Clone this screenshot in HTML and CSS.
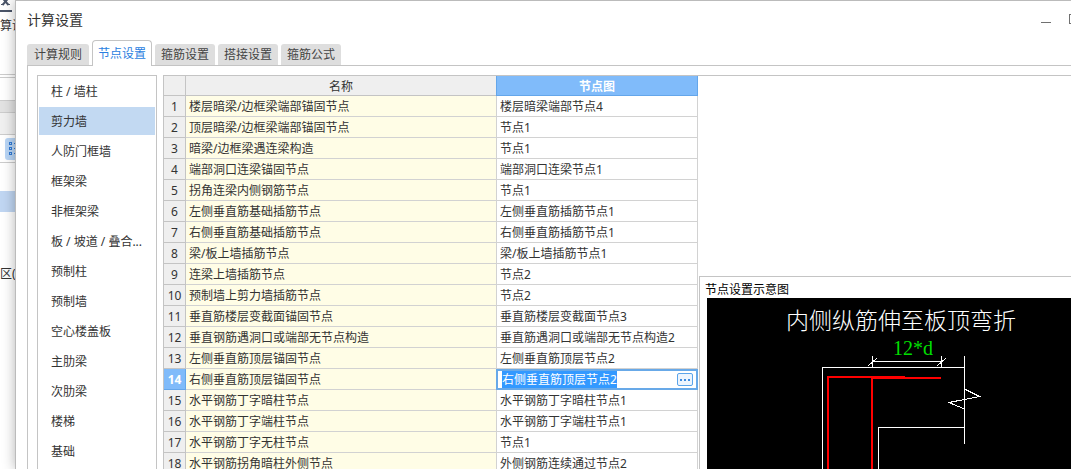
FILE: index.html
```html
<!DOCTYPE html>
<html lang="zh-CN">
<head>
<meta charset="utf-8">
<title>计算设置</title>
<link rel="stylesheet" href="styles.css">
</head>
<body>
<aside class="backdrop">
  <div class="bd-close"><svg width="12" height="10" viewBox="0 0 12 10"><path d="M2.500 -2L8.500 5M8.500 -2L2.500 5" stroke="#4a5468" stroke-width="2"/><path d="M1 4.500h3M7 4.500h3" stroke="#4a5468"/></svg></div>
  <div class="bd-title">算设</div>
  <div class="bd-row"></div>
  <div class="bd-band"></div>
  <div class="bd-panel"></div>
  <div class="bd-tool"><span class="bd-icon"><svg width="16" height="16" viewBox="0 0 16 16" fill="none" stroke="#2f7ad6"><rect x="1.5" y="1.5" width="2" height="2"/><rect x="1.5" y="6.5" width="2" height="2"/><rect x="1.5" y="11.5" width="2" height="2"/><path d="M6 2.5h8M6 7.5h8M6 12.5h8"/></svg></span></div>
  <div class="bd-highlight"></div>
  <div class="bd-text">区(</div>
</aside>
<main class="dialog">
  <header class="titlebar">
    <h1 class="title">计算设置</h1>
    <div class="controls">
      <button class="control" aria-label="最小化"><svg width="10" height="10" viewBox="0 0 10 10"><path d="M0 8.5h10" stroke="#707070"/></svg></button>
      <button class="control" aria-label="最大化"><svg width="10" height="10" viewBox="0 0 10 10"><rect x=".5" y=".5" width="9" height="9" fill="none" stroke="#707070"/></svg></button>
    </div>
  </header>
  <nav class="tabs">
    <button class="tab">计算规则</button>
    <button class="tab active">节点设置</button>
    <button class="tab">箍筋设置</button>
    <button class="tab">搭接设置</button>
    <button class="tab">箍筋公式</button>
  </nav>
  <section class="panel">
    <div class="types">
      <button class="type">柱 / 墙柱</button>
      <button class="type selected">剪力墙</button>
      <button class="type">人防门框墙</button>
      <button class="type">框架梁</button>
      <button class="type">非框架梁</button>
      <button class="type">板 / 坡道 / 叠合...</button>
      <button class="type">预制柱</button>
      <button class="type">预制墙</button>
      <button class="type">空心楼盖板</button>
      <button class="type">主肋梁</button>
      <button class="type">次肋梁</button>
      <button class="type">楼梯</button>
      <button class="type">基础</button>
    </div>
    <div class="content">
      <table class="grid">
        <colgroup><col class="c-num"><col class="c-name"><col class="c-node"></colgroup>
        <thead><tr><th></th><th>名称</th><th class="current">节点图</th></tr></thead>
        <tbody>
          <tr><th>1</th><td>楼层暗梁/边框梁端部锚固节点</td><td>楼层暗梁端部节点4</td></tr>
          <tr><th>2</th><td>顶层暗梁/边框梁端部锚固节点</td><td>节点1</td></tr>
          <tr><th>3</th><td>暗梁/边框梁遇连梁构造</td><td>节点1</td></tr>
          <tr><th>4</th><td>端部洞口连梁锚固节点</td><td>端部洞口连梁节点1</td></tr>
          <tr><th>5</th><td>拐角连梁内侧钢筋节点</td><td>节点1</td></tr>
          <tr><th>6</th><td>左侧垂直筋基础插筋节点</td><td>左侧垂直筋插筋节点1</td></tr>
          <tr><th>7</th><td>右侧垂直筋基础插筋节点</td><td>右侧垂直筋插筋节点1</td></tr>
          <tr><th>8</th><td>梁/板上墙插筋节点</td><td>梁/板上墙插筋节点1</td></tr>
          <tr><th>9</th><td>连梁上墙插筋节点</td><td>节点2</td></tr>
          <tr><th>10</th><td>预制墙上剪力墙插筋节点</td><td>节点2</td></tr>
          <tr><th>11</th><td>垂直筋楼层变截面锚固节点</td><td>垂直筋楼层变截面节点3</td></tr>
          <tr><th>12</th><td>垂直钢筋遇洞口或端部无节点构造</td><td>垂直筋遇洞口或端部无节点构造2</td></tr>
          <tr><th>13</th><td>左侧垂直筋顶层锚固节点</td><td>左侧垂直筋顶层节点2</td></tr>
          <tr><th class="current">14</th><td>右侧垂直筋顶层锚固节点</td><td class="edit-cell"><div class="editor"><input class="edit-input" type="text" aria-label="节点图" value="右侧垂直筋顶层节点2"><button class="more" aria-label="选择节点"><svg width="10" height="2" viewBox="0 0 10 2" fill="#3d8be0"><path d="M0 0h2v2H0zM4 0h2v2H4zM8 0h2v2H8z"/></svg></button></div></td></tr>
          <tr><th>15</th><td>水平钢筋丁字暗柱节点</td><td>水平钢筋丁字暗柱节点1</td></tr>
          <tr><th>16</th><td>水平钢筋丁字端柱节点</td><td>水平钢筋丁字端柱节点1</td></tr>
          <tr><th>17</th><td>水平钢筋丁字无柱节点</td><td>节点1</td></tr>
          <tr><th>18</th><td>水平钢筋拐角暗柱外侧节点</td><td>外侧钢筋连续通过节点2</td></tr>
        </tbody>
      </table>
      <div class="side">
        <div class="blank"></div>
        <section class="preview">
          <h2 class="preview-title">节点设置示意图</h2>
          <div class="canvas">
            <svg width="364" height="171" viewBox="707 298 364 171" fill="none" shape-rendering="crispEdges">
              <g stroke="#fff">
                <path d="M822.5 469V367.5H964.5M878.5 469V427.5H964.5M964.5 356V444"/>
                <path d="M872.5 356V367M941.5 356V367M872 361.5H942"/>
                <path d="M868 366L877 358M937 366L946 358M964.5 389L979.5 396.500L949 402.500L964.5 409"/>
              </g>
              <g stroke="#f00" stroke-width="2"><path d="M828 469V377H905M872 469V378H941"/></g>
              <text class="caption" x="786" y="329">内侧纵筋伸至板顶弯折</text>
              <text class="dimension" x="893" y="355">12*d</text>
            </svg>
          </div>
        </section>
      </div>
    </div>
  </section>
</main>
<script src="script.js"></script>
</body>
</html>
```
FILE: styles.css
```css
* { box-sizing: border-box; }
body {
  margin: 0;
  height: 100vh;
  display: flex;
  overflow: hidden;
  background: #fff;
  color: #333;
  font: 12px/20px "Noto Sans", "Noto Sans CJK SC", sans-serif;
}
button, input { font: inherit; color: inherit; border: 0; padding: 0; margin: 0; background: none; }
h1, h2 { margin: 0; font-weight: 400; }
svg { display: block; }

/* Main window behind the dialog */
.backdrop { width: 15px; flex: none; overflow: hidden; white-space: nowrap; }
.bd-close { height: 12px; width: 12px; border-bottom: 2px solid #4a5468; }
.bd-title { height: 63px; padding-top: 4px; border-bottom: 1px solid #ccc; }
.bd-row { height: 24px; margin-top: 2px; border: solid #ccc; border-width: 1px 0; }
.bd-band { height: 12px; background: #e2e2e2; border-bottom: 1px solid #ccc; }
.bd-panel { height: 22px; background: #f0f0f0; border-bottom: 1px solid #ccc; }
.bd-tool { height: 28px; padding: 3px 0 0 5px; border-bottom: 1px solid #ccc; }
.bd-icon { display: block; width: 24px; height: 22px; padding: 3px; border-radius: 3px; background: #b9d6f6; }
.bd-highlight { height: 21px; margin-top: 28px; background: #c0d6f2; }
.bd-text { margin-top: 52px; }

.dialog {
  flex: 1;
  min-width: 0;
  display: flex;
  flex-direction: column;
  overflow: hidden;
  background: #fff;
  border: solid #bbb;
  border-width: 1px 0 0 1px;
  box-shadow: 0 0 12px rgba(0, 0, 0, .3);
}
.titlebar { height: 39px; flex: none; display: flex; padding-left: 11px; }
.title { flex: 1; font-size: 14px; line-height: 38px; }
.controls { display: flex; gap: 18px; margin: 13px -8px 0 0; }
.control { width: 10px; height: 10px; }

.tabs { flex: none; display: flex; align-items: flex-end; gap: 3px; padding-left: 11px; }
.tab { height: 21px; padding: 0 6px; background: #dedede; border-radius: 3px 3px 0 0; color: #444; line-height: 21px; }
.tab:first-child { padding: 0 7px; }
.tab.active {
  position: relative;
  height: 26px;
  margin-bottom: -1px;
  padding: 0 5px;
  background: #fff;
  border: 1px solid #c4c4c4;
  border-bottom: 0;
  border-radius: 4px 4px 0 0;
  color: #2a7ee0;
  line-height: 26px;
}

.panel {
  flex: 1;
  min-height: 0;
  display: flex;
  gap: 6px;
  margin-left: 11px;
  padding: 9px 0 0 9px;
  border: solid #c4c4c4;
  border-width: 1px 0 0 1px;
}
.types {
  flex: none;
  width: 120px;
  display: flex;
  flex-direction: column;
  gap: 2px;
  padding: 1px;
  border: 1px solid #c4c4c4;
  border-bottom: 0;
}
.type { flex: none; height: 28px; padding: 2px 0 0 12px; text-align: left; white-space: nowrap; }
.type.selected { background: #c2d9f2; }

.content { flex: 1; min-width: 0; display: flex; border: solid #c4c4c4; border-width: 1px 0 0 1px; }
.grid { flex: none; align-self: flex-start; width: 534px; table-layout: fixed; border-collapse: separate; border-spacing: 0; }
.c-num { width: 22px; }
.c-name { width: 311px; }
.c-node { width: 201px; }
.grid th, .grid td { height: 21px; padding: 2px 0 0; line-height: 18px; border: solid #d2d2d2; border-width: 0 1px 1px 0; white-space: nowrap; }
.grid thead th { height: 20px; line-height: 17px; }
.grid th { background: #efefef; border-color: #c4c4c4; font-weight: 400; text-align: center; }
.grid td { padding-left: 3px; }
.grid td:nth-child(2) { background: #fffde6; }
.grid th.current { background: #80bbfa; border-color: #64a6ea; color: #fff; font-weight: 700; }
.grid thead th.current { box-shadow: -1px 0 #64a6ea; }

.grid td.edit-cell { padding: 0; border: 0; }
.editor { display: flex; align-items: center; height: 21px; margin-left: -1px; padding: 0 3px 0 4px; position: relative; background: #fff; border: 2px solid #68a9e8; }
.edit-input { flex: 1; min-width: 0; height: 17px; outline: 0; line-height: 17px; }
.edit-input::selection { background: #3399ff; color: #fff; }
.more { flex: none; display: flex; align-items: center; justify-content: center; width: 16px; height: 13px; border: 1px solid #5ba4ea; border-radius: 2px; background: #edf5fe; }

.side { flex: 1; min-width: 0; display: flex; flex-direction: column; padding-left: 1px; }
.blank { flex: none; height: 200px; }
.preview { flex: 1; min-height: 0; display: flex; flex-direction: column; border: solid #c4c4c4; border-width: 1px 0 0 1px; }
.preview-title { flex: none; padding: 4px 5px 0; font-size: 12px; line-height: 17px; color: #000; }
.canvas { flex: 1; min-height: 0; margin-left: 7px; background: #000; overflow: hidden; }
.caption { fill: #fff; font: 300 23px "Noto Sans CJK SC", sans-serif; }
.dimension { fill: #0d0; font: 20px "Liberation Serif", serif; }
```
FILE: script.js
```js
const input = document.querySelector('.edit-input');
input.focus({ preventScroll: true });
input.select();
```
